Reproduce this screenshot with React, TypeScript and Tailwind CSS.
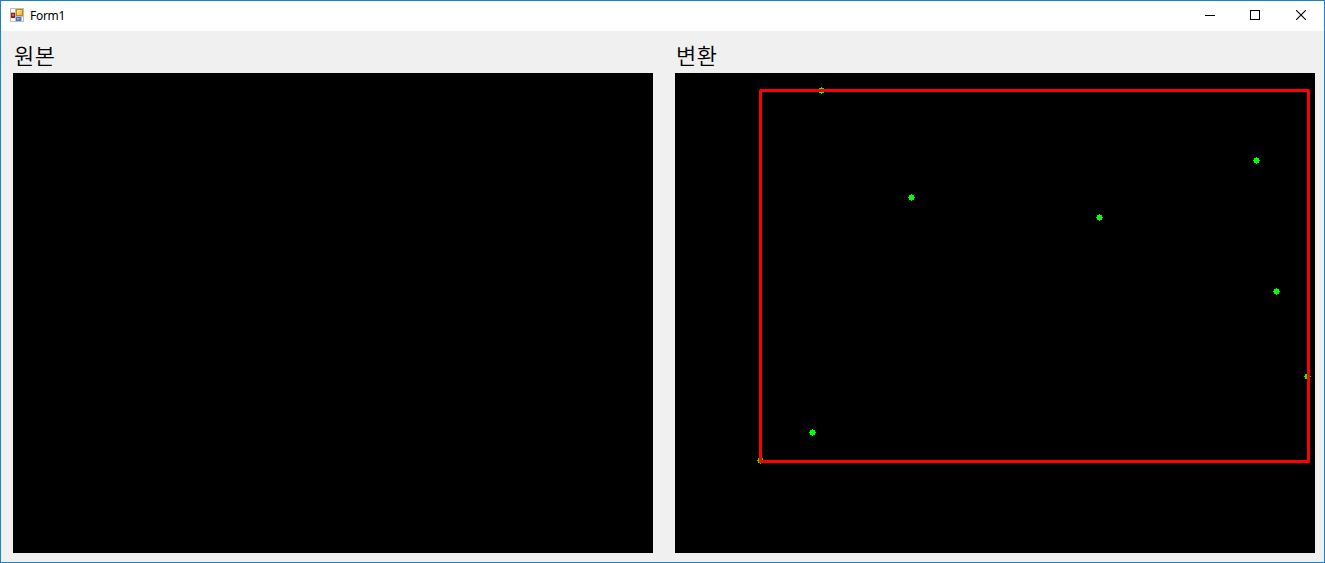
import React from "react";

type Point = [number, number];

const points: Point[] = [
  [146, 17],
  [236, 124],
  [581, 87],
  [424, 144],
  [601, 218],
  [632, 303],
  [137, 359],
  [85, 387],
];

function FormIcon() {
  return (
    <svg width="14" height="14" viewBox="0 0 14 14" shapeRendering="crispEdges" aria-hidden="true">
      <defs>
        <linearGradient id="gold" x1="0" y1="0" x2="1" y2="1">
          <stop offset="0" stopColor="#fff0a0" />
          <stop offset="1" stopColor="#eeb01c" />
        </linearGradient>
        <linearGradient id="blue" x1="0" y1="0" x2="1" y2="1">
          <stop offset="0" stopColor="#9cc6ff" />
          <stop offset="1" stopColor="#3f7de8" />
        </linearGradient>
      </defs>
      <rect width="14" height="14" fill="#bdbdbd" />
      <rect x="1" y="1" width="4" height="3" fill="#fff" />
      <rect x="1" y="10" width="4" height="3" fill="#fff" />
      <rect x="12" y="9" width="1" height="4" fill="#fff" />
      <rect x="1" y="5" width="4" height="5" fill="#9e1c16" />
      <rect x="2" y="6" width="2" height="2" fill="#d8685c" />
      <rect x="6" y="1" width="7" height="7" fill="#c58a10" />
      <rect x="7" y="2" width="5" height="5" fill="url(#gold)" />
      <rect x="6" y="9" width="5" height="4" fill="#3c74d4" />
      <rect x="7" y="10" width="3" height="2" fill="url(#blue)" />
    </svg>
  );
}

function TitleBar() {
  return (
    <header className="flex h-[30px] shrink-0 items-start bg-white pl-[9px]">
      <div className="pt-[7px]">
        <FormIcon />
      </div>
      <h1 className="ml-[6px] pt-[6px] font-['Noto_Sans','Noto_Sans_CJK_KR',sans-serif] text-[12px] leading-[18px] tracking-[-0.3px] text-black">
        Form1
      </h1>
      <div className="ml-auto flex gap-[35px] pt-[9px] pr-[18px]">
        <button type="button" aria-label="Minimize" className="block">
          <svg width="10" height="10" shapeRendering="crispEdges">
            <path d="M0 5.5H10" stroke="#000" />
          </svg>
        </button>
        <button type="button" aria-label="Maximize" className="block">
          <svg width="10" height="10" shapeRendering="crispEdges">
            <rect x="0.5" y="0.5" width="9" height="9" fill="none" stroke="#000" />
          </svg>
        </button>
        <button type="button" aria-label="Close" className="ml-px block">
          <svg width="10" height="10">
            <path d="M0 0L10 10M10 0L0 10" stroke="#000" strokeWidth="1.1" />
          </svg>
        </button>
      </div>
    </header>
  );
}

function Panel({ title, children }: { title: string; children?: React.ReactNode }) {
  return (
    <section className="w-[640px]">
      <h2 className="h-[42px] pt-[8px] pl-px font-['Noto_Sans_CJK_KR',sans-serif] text-[22px] leading-[30px] font-[350] tracking-[0.4px] text-black">
        {title}
      </h2>
      <div className="h-[480px] bg-black">{children}</div>
    </section>
  );
}

function BoundingPlot() {
  return (
    <svg width="640" height="480" className="block">
      {points.map(([x, y]) => (
        <path
          key={`${x}-${y}`}
          d={`M${x - 2} ${y - 2}h2v-1h1v1h2v2h1v1h-1v2h-2v1h-1v-1h-2v-2h-1v-1h1z`}
          fill="#00ff00"
          shapeRendering="crispEdges"
        />
      ))}
      <rect x="85.5" y="17.5" width="548" height="371" fill="none" stroke="#ff0000" strokeWidth="3" strokeLinejoin="round" />
    </svg>
  );
}

export default function App() {
  return (
    <div className="flex h-[563px] w-[1325px] flex-col overflow-hidden border border-[#1f80ca] bg-[#f0f0f0]">
      <TitleBar />
      <main className="flex gap-[22px] pl-[12px]">
        <Panel title="원본" />
        <Panel title="변환">
          <BoundingPlot />
        </Panel>
      </main>
    </div>
  );
}
